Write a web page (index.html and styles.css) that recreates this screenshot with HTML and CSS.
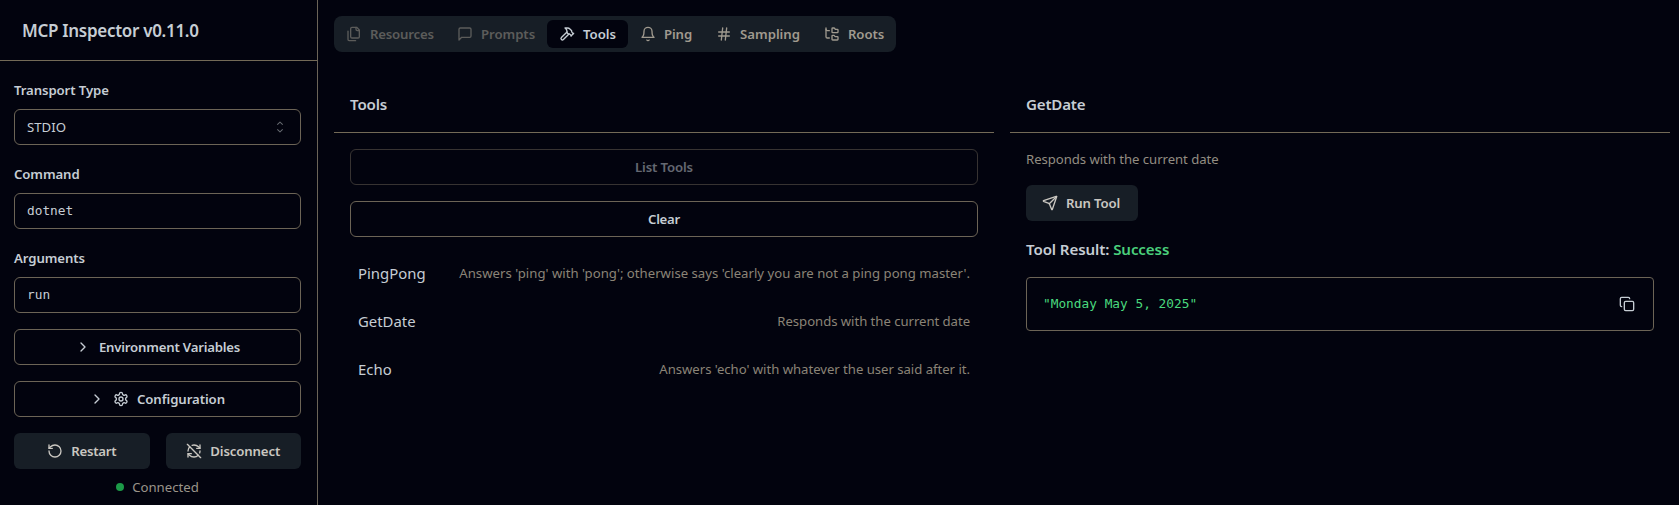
FILE: index.html
```html
<!DOCTYPE html>
<html lang="en">
<head>
<meta charset="utf-8">
<title>MCP Inspector</title>
<link rel="stylesheet" href="styles.css">
</head>
<body>
<div class="app">
  <aside class="sidebar">
    <header class="brand"><h1>MCP Inspector v0.11.0</h1></header>
    <div class="form">
      <div class="field">
        <label>Transport Type</label>
        <div class="input select"><span>STDIO</span>
          <svg class="icon" viewBox="0 0 15 15"><path class="solid" d="M4.93 5.43a.45.45 0 0 0 .64 0L7.5 3.5l1.93 1.93a.45.45 0 1 0 .64-.64L7.82 2.54a.45.45 0 0 0-.64 0L4.93 4.79a.45.45 0 0 0 0 .64Zm0 4.14a.45.45 0 0 1 .64 0L7.5 11.5l1.93-1.93a.45.45 0 0 1 .64.64l-2.25 2.25a.45.45 0 0 1-.64 0l-2.25-2.25a.45.45 0 0 1 0-.64Z"/></svg>
        </div>
      </div>
      <div class="field">
        <label>Command</label>
        <div class="input mono">dotnet</div>
      </div>
      <div class="field">
        <label>Arguments</label>
        <div class="input mono">run</div>
      </div>
      <button class="btn outline env">
        <svg class="icon" viewBox="0 0 24 24"><path d="m9 18 6-6-6-6"/></svg>
        <span>Environment Variables</span>
      </button>
      <button class="btn outline config">
        <svg class="icon" viewBox="0 0 24 24"><path d="m9 18 6-6-6-6"/></svg>
        <svg class="icon" viewBox="0 0 24 24"><path d="M12.22 2h-.44a2 2 0 0 0-2 2v.18a2 2 0 0 1-1 1.73l-.43.25a2 2 0 0 1-2 0l-.15-.08a2 2 0 0 0-2.73.73l-.22.38a2 2 0 0 0 .73 2.73l.15.1a2 2 0 0 1 1 1.72v.51a2 2 0 0 1-1 1.74l-.15.09a2 2 0 0 0-.73 2.73l.22.38a2 2 0 0 0 2.73.73l.15-.08a2 2 0 0 1 2 0l.43.25a2 2 0 0 1 1 1.73V20a2 2 0 0 0 2 2h.44a2 2 0 0 0 2-2v-.18a2 2 0 0 1 1-1.73l.43-.25a2 2 0 0 1 2 0l.15.08a2 2 0 0 0 2.73-.73l.22-.39a2 2 0 0 0-.73-2.73l-.15-.08a2 2 0 0 1-1-1.74v-.5a2 2 0 0 1 1-1.74l.15-.09a2 2 0 0 0 .73-2.73l-.22-.38a2 2 0 0 0-2.73-.73l-.15.08a2 2 0 0 1-2 0l-.43-.25a2 2 0 0 1-1-1.73V4a2 2 0 0 0-2-2z"/><circle cx="12" cy="12" r="3"/></svg>
        <span>Configuration</span>
      </button>
      <div class="connection">
        <div class="actions">
          <button class="btn filled restart">
            <svg class="icon" viewBox="0 0 24 24"><path d="M3 12a9 9 0 1 0 9-9 9.75 9.75 0 0 0-6.74 2.74L3 8"/><path d="M3 3v5h5"/></svg>
            <span>Restart</span>
          </button>
          <button class="btn filled">
            <svg class="icon" viewBox="0 0 24 24"><path d="M21 8L18.74 5.74A9.75 9.75 0 0 0 12 3C11 3 10.03 3.16 9.13 3.47"/><path d="M8 16H3v5"/><path d="M3 12C3 9.51 4 7.26 5.64 5.64"/><path d="m3 16 2.26 2.26A9.75 9.75 0 0 0 12 21c2.49 0 4.74-1 6.36-2.64"/><path d="M21 12c0 1-.16 1.97-.47 2.87"/><path d="M21 3v5h-5"/><path d="M22 22 2 2"/></svg>
            <span>Disconnect</span>
          </button>
        </div>
        <p class="status"><i class="dot"></i><span>Connected</span></p>
      </div>
    </div>
  </aside>
  <main class="main">
    <nav class="tabs">
      <a class="tab disabled resources"><svg class="icon" viewBox="0 0 24 24"><path d="M20 7h-3a2 2 0 0 1-2-2V2"/><path d="M9 18a2 2 0 0 1-2-2V4a2 2 0 0 1 2-2h7l4 4v10a2 2 0 0 1-2 2Z"/><path d="M3 7.6v12.8A1.6 1.6 0 0 0 4.6 22h9.8"/></svg><span>Resources</span></a>
      <a class="tab disabled prompts"><svg class="icon" viewBox="0 0 24 24"><path d="M21 15a2 2 0 0 1-2 2H7l-4 4V5a2 2 0 0 1 2-2h14a2 2 0 0 1 2 2z"/></svg><span>Prompts</span></a>
      <a class="tab active tools"><svg class="icon" viewBox="0 0 24 24"><path d="m15 12-8.373 8.373a1 1 0 1 1-3-3L12 9"/><path d="m18 15 4-4"/><path d="m21.5 11.5-1.914-1.914A2 2 0 0 1 19 8.172V7l-2.26-2.26a6 6 0 0 0-4.202-1.756L9 2.96l.92.82A6.18 6.18 0 0 1 12 8.4V10l2 2h1.172a2 2 0 0 1 1.414.586L18.5 14.5"/></svg><span>Tools</span></a>
      <a class="tab ping"><svg class="icon" viewBox="0 0 24 24"><path d="M6 8a6 6 0 0 1 12 0c0 7 3 9 3 9H3s3-2 3-9"/><path d="M10.3 21a1.94 1.94 0 0 0 3.4 0"/></svg><span>Ping</span></a>
      <a class="tab sampling"><svg class="icon" viewBox="0 0 24 24"><path d="M4 9h16M4 15h16M10 3 8 21M16 3l-2 18"/></svg><span>Sampling</span></a>
      <a class="tab roots"><svg class="icon" viewBox="0 0 24 24"><path d="M20 10a1 1 0 0 0 1-1V6a1 1 0 0 0-1-1h-2.5a1 1 0 0 1-.8-.4l-.9-1.2A1 1 0 0 0 15 3h-2a1 1 0 0 0-1 1v5a1 1 0 0 0 1 1Z"/><path d="M20 21a1 1 0 0 0 1-1v-3a1 1 0 0 0-1-1h-2.9a1 1 0 0 1-.88-.55l-.42-.85a1 1 0 0 0-.92-.6H13a1 1 0 0 0-1 1v5a1 1 0 0 0 1 1Z"/><path d="M3 5a2 2 0 0 0 2 2h3"/><path d="M3 3v13a2 2 0 0 0 2 2h3"/></svg><span>Roots</span></a>
    </nav>
    <div class="panels">
      <section class="panel">
        <h3>Tools</h3>
        <div class="body">
          <button class="btn outline off">List Tools</button>
          <button class="btn outline clear">Clear</button>
          <ul class="list">
            <li><span>PingPong</span><span class="desc long">Answers 'ping' with 'pong'; otherwise says 'clearly you are not a ping pong master'.</span></li>
            <li><span>GetDate</span><span class="desc short">Responds with the current date</span></li>
            <li><span>Echo</span><span class="desc echo">Answers 'echo' with whatever the user said after it.</span></li>
          </ul>
        </div>
      </section>
      <section class="panel">
        <h3 class="tool-name">GetDate</h3>
        <div class="body detail">
          <p class="desc short">Responds with the current date</p>
          <button class="btn filled run">
            <svg class="icon" viewBox="0 0 24 24"><path d="M14.536 21.686a.5.5 0 0 0 .937-.024l6.5-19a.496.496 0 0 0-.635-.635l-19 6.5a.5.5 0 0 0-.024.937l7.93 3.18a2 2 0 0 1 1.112 1.11z"/><path d="m21.854 2.147-10.94 10.939"/></svg>
            <span>Run Tool</span>
          </button>
          <h4>Tool Result: <span class="success">Success</span></h4>
          <div class="result">
            <code>"Monday May 5, 2025"</code>
            <svg class="icon" viewBox="0 0 24 24"><rect x="8" y="8" width="14" height="14" rx="2"/><path d="M4 16c-1.1 0-2-.9-2-2V4c0-1.1.9-2 2-2h10c1.1 0 2 .9 2 2"/></svg>
          </div>
        </div>
      </section>
    </div>
  </main>
</div>
</body>
</html>
```
FILE: styles.css
```css
* { box-sizing: border-box; }

body {
  margin: 0;
  height: 505px;
  overflow: hidden;
  background: #02030e;
  color: #c6cdd4;
  font: 13.2px/20px "Noto Sans", sans-serif;
}

h1, h3, h4, p, ul { margin: 0; padding: 0; }

.app { display: flex; height: 505px; }

.icon {
  width: 16px;
  height: 16px;
  flex: none;
  fill: none;
  stroke: currentColor;
  stroke-width: 2;
  stroke-linecap: round;
  stroke-linejoin: round;
}
.icon .solid { fill: currentColor; stroke: none; }

/* Sidebar */
.sidebar {
  width: 318px;
  flex: none;
  border-right: 1px solid #6b6458;
}
.brand {
  height: 61px;
  padding: 17px 0 0 22px;
  border-bottom: 1px solid #736a57;
}
.brand h1 {
  font-size: 17px;
  font-weight: 600;
  line-height: 28px;
  letter-spacing: -0.3px;
}
.form {
  display: flex;
  flex-direction: column;
  gap: 16px;
  padding: 16px 16px 0 14px;
}
.field { padding-top: 3px; }
.field label {
  display: block;
  height: 20px;
  margin-bottom: 9px;
  font-weight: 600;
  letter-spacing: -0.1px;
}
.input {
  display: flex;
  align-items: center;
  height: 36px;
  padding: 0 12px;
  border: 1px solid #6c6456;
  border-radius: 6px;
}
.select { justify-content: space-between; }
.select .icon { color: #686c72; }
.mono, code { font-family: "DejaVu Sans Mono", monospace; font-size: 12.8px; }

.btn {
  display: flex;
  align-items: center;
  justify-content: center;
  gap: 8px;
  height: 36px;
  padding: 0 16px 1px;
  border: 0;
  border-radius: 6px;
  background: none;
  color: inherit;
  font: inherit;
  font-weight: 600;
  letter-spacing: -0.14px;
}
.btn .icon { position: relative; top: 0.5px; }
.outline { border: 1px solid #6c6456; }
.filled { background: #171e26; color: #cac7c1; }
.env { letter-spacing: -0.2px; }
.config { padding-right: 17px; letter-spacing: -0.08px; }
.off { opacity: 0.5; }
.clear { letter-spacing: -0.25px; }

.actions { display: grid; grid-template-columns: 1fr 1fr; gap: 16px; }
.restart { letter-spacing: -0.25px; }
.status {
  display: flex;
  align-items: center;
  justify-content: center;
  gap: 8px;
  margin-top: 8px;
  color: #9a948a;
}
.dot { width: 8px; height: 8px; border-radius: 50%; background: #1c9a48; }

/* Main area */
.main { flex: 1; padding: 16px 9px 0 16px; }
.tabs {
  display: flex;
  align-items: center;
  width: 562px;
  height: 36px;
  border-radius: 8px;
  background: #171e26;
  color: #a09a8f;
  font-weight: 600;
  letter-spacing: -0.12px;
}
.tab {
  display: flex;
  align-items: center;
  gap: 8px;
  height: 28px;
  padding: 0 12px;
  border-radius: 6px;
}
.disabled { opacity: 0.5; }
.active { background: #02030e; color: #c6cdd4; }
.resources { width: 111px; letter-spacing: -0.2px; }
.prompts { width: 102px; letter-spacing: -0.05px; }
.tools { width: 81px; letter-spacing: 0; }
.ping { width: 76px; }
.sampling { width: 108px; letter-spacing: 0; }

.panels {
  display: grid;
  grid-template-columns: 1fr 1fr;
  gap: 16px;
  margin-top: 24px;
}
.panel h3 {
  height: 57px;
  padding: 16px 16px 0;
  border-bottom: 1px solid #736a57;
  font-size: 15.1px;
  font-weight: 600;
  line-height: 24px;
  letter-spacing: -0.15px;
}
.panel .tool-name { letter-spacing: -0.2px; }
.body {
  display: flex;
  flex-direction: column;
  gap: 16px;
  padding: 16px;
}
.list { display: grid; gap: 8px; list-style: none; }
.list li {
  display: flex;
  align-items: center;
  justify-content: space-between;
  height: 40px;
  padding: 0 8px;
  font-size: 14.9px;
}
.desc { color: #8b8477; font-size: 13.15px; }
.long { letter-spacing: 0.02px; }
.short { letter-spacing: -0.04px; }
.echo { letter-spacing: -0.025px; }
.detail .desc { color: #938d82; }
.run { align-self: flex-start; width: 112px; padding: 0 2px 1px 0; }
h4 {
  font-size: 15.1px;
  font-weight: 600;
  line-height: 24px;
  letter-spacing: -0.1px;
}
.success { color: #4ad07c; }
.result {
  display: flex;
  align-items: center;
  justify-content: space-between;
  height: 54px;
  padding: 0 18px 0 16px;
  border: 1px solid #6c6456;
  border-radius: 4px;
  color: #4ad97e;
}
.result .icon { color: #c6cdd4; }
```
